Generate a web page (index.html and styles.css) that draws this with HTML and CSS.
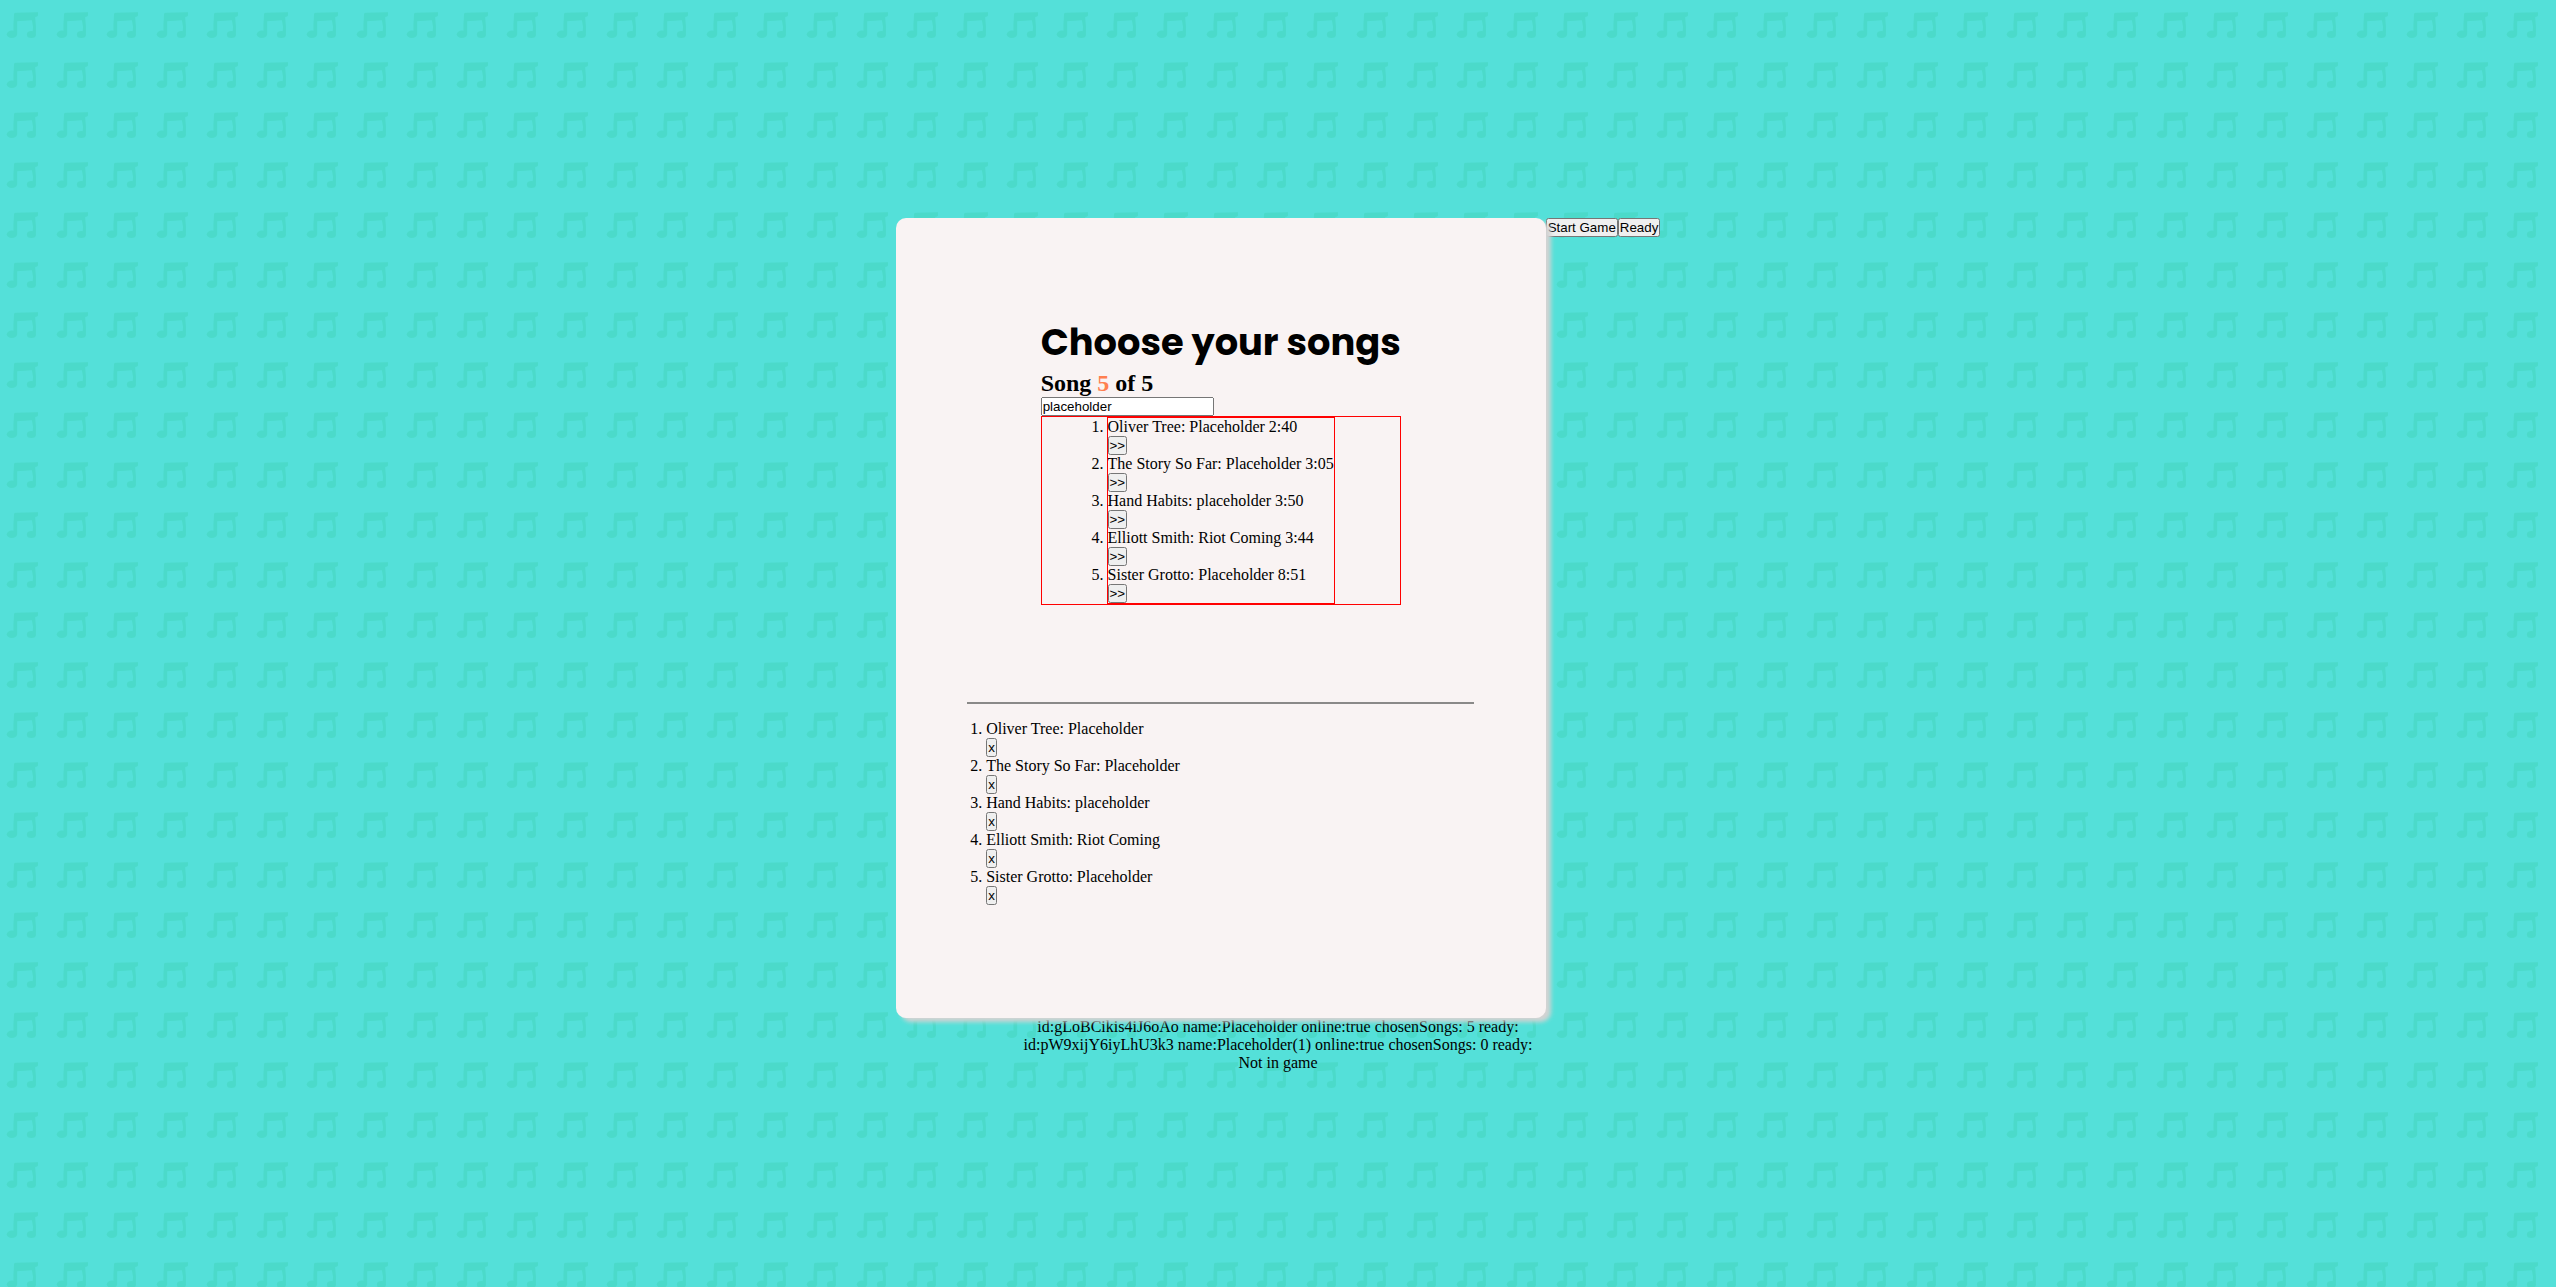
FILE: index.html
```html
<!DOCTYPE html>
<html lang="en">
<head>
<meta charset="utf-8">
<title>Choose your songs</title>
<link rel="stylesheet" href="styles.css">
</head>
<body>
<main class="game">
  <section class="card">
    <div class="picker">
      <h1 class="title">Choose your songs</h1>
      <h2 class="progress">Song <span class="current">5</span> of 5</h2>
      <input class="search" type="text" value="placeholder">
      <div class="results">
        <ol class="result-list">
          <li>Oliver Tree: Placeholder 2:40<div class="action"><button>&gt;&gt;</button></div></li>
          <li>The Story So Far: Placeholder 3:05<div class="action"><button>&gt;&gt;</button></div></li>
          <li>Hand Habits: placeholder 3:50<div class="action"><button>&gt;&gt;</button></div></li>
          <li>Elliott Smith: Riot Coming 3:44<div class="action"><button>&gt;&gt;</button></div></li>
          <li>Sister Grotto: Placeholder 8:51<div class="action"><button>&gt;&gt;</button></div></li>
        </ol>
      </div>
    </div>
    <div class="chosen">
      <ol class="chosen-list">
        <li>Oliver Tree: Placeholder<div class="action"><button>x</button></div></li>
        <li>The Story So Far: Placeholder<div class="action"><button>x</button></div></li>
        <li>Hand Habits: placeholder<div class="action"><button>x</button></div></li>
        <li>Elliott Smith: Riot Coming<div class="action"><button>x</button></div></li>
        <li>Sister Grotto: Placeholder<div class="action"><button>x</button></div></li>
      </ol>
    </div>
  </section>
  <div class="controls"><button>Start Game</button><button>Ready</button></div>
</main>
<footer class="status">
  <p>id:gLoBCikis4iJ6oAo name:Placeholder online:true chosenSongs: 5 ready:</p>
  <p>id:pW9xijY6iyLhU3k3 name:Placeholder(1) online:true chosenSongs: 0 ready:</p>
  <p>Not in game</p>
</footer>
</body>
</html>
```
FILE: styles.css
```css
* {
  margin: 0;
  padding: 0;
  box-sizing: border-box;
}

body {
  min-height: 100vh;
  padding-top: 218px;
  font: 16px/18px "Liberation Serif", serif;
  color: #000;
  background: #54e0d9 url("data:image/svg+xml,%3Csvg xmlns='http://www.w3.org/2000/svg' width='50' height='50'%3E%3Cg fill='%234bdaca'%3E%3Cpath d='M14 14.500Q14 12.800 15.500 12.800L36 12.300Q38 11.700 38 12.500V15.500Q37.500 16.800 35.200 17L35.900 26V33.500H32.500L33 27L31.900 20.300L17.200 21.200V34H13.400V25Z'/%3E%3Cellipse cx='11.900' cy='34.300' rx='5.200' ry='3.700'/%3E%3Cellipse cx='31.400' cy='34.500' rx='4.600' ry='3.500'/%3E%3C/g%3E%3C/svg%3E");
}

button,
input {
  font: 13.333px/15px "Liberation Sans", Arial, sans-serif;
}

button {
  display: block;
  height: 19px;
}

.game {
  display: flex;
  justify-content: center;
  align-items: flex-start;
}

.card {
  position: relative;
  z-index: 1;
  display: flex;
  flex-direction: column;
  align-items: center;
  width: 650px;
  height: 800px;
  padding-top: 98px;
  border-radius: 10px;
  background: #f9f3f3;
  box-shadow: 5px 4px 4px lightgray;
}

.picker {
  width: 360px;
}

.title {
  height: 54px;
  font: 700 36.8px/52px Poppins, Inter, sans-serif;
  white-space: nowrap;
}

.progress {
  font-size: 24px;
  line-height: 27px;
}

.current {
  color: coral;
}

.search {
  display: block;
  width: 173px;
  height: 19px;
}

.results {
  display: flex;
  justify-content: center;
  border: 1px solid red;
}

.result-list {
  border: 1px solid red;
}

.action {
  height: 19px;
}

.chosen {
  width: 507px;
  margin-top: 97px;
  padding: 16px 0 0 19px;
  border-top: 2px solid #8a8988;
}

.controls {
  display: flex;
}

.status {
  text-align: center;
}
```
